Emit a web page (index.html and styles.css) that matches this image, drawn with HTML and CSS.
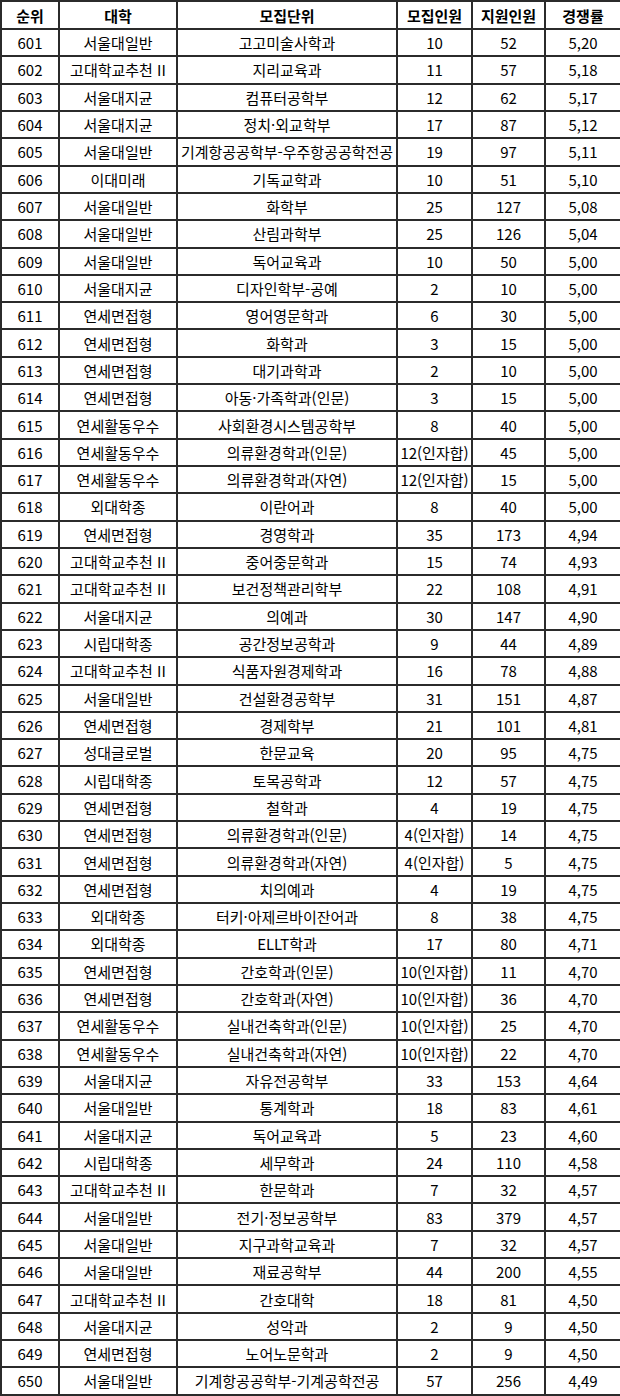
FILE: index.html
```html
<!DOCTYPE html>
<html lang="ko">
<head>
<meta charset="utf-8">
<title>경쟁률 601-650</title>
<link rel="stylesheet" href="styles.css">
</head>
<body>
<table class="rank-table">
<colgroup>
<col class="c-rank"><col class="c-univ"><col class="c-unit"><col class="c-quota"><col class="c-apply"><col class="c-ratio">
</colgroup>
<thead>
<tr class="head-row"><th>순위</th><th>대학</th><th>모집단위</th><th>모집인원</th><th>지원인원</th><th>경쟁률</th></tr>
</thead>
<tbody>
<tr><td>601</td><td>서울대일반</td><td>고고미술사학과</td><td>10</td><td>52</td><td>5,20</td></tr>
<tr><td>602</td><td>고대학교추천 II</td><td>지리교육과</td><td>11</td><td>57</td><td>5,18</td></tr>
<tr><td>603</td><td>서울대지균</td><td>컴퓨터공학부</td><td>12</td><td>62</td><td>5,17</td></tr>
<tr><td>604</td><td>서울대지균</td><td>정치·외교학부</td><td>17</td><td>87</td><td>5,12</td></tr>
<tr><td>605</td><td>서울대일반</td><td>기계항공공학부-우주항공공학전공</td><td>19</td><td>97</td><td>5,11</td></tr>
<tr><td>606</td><td>이대미래</td><td>기독교학과</td><td>10</td><td>51</td><td>5,10</td></tr>
<tr><td>607</td><td>서울대일반</td><td>화학부</td><td>25</td><td>127</td><td>5,08</td></tr>
<tr><td>608</td><td>서울대일반</td><td>산림과학부</td><td>25</td><td>126</td><td>5,04</td></tr>
<tr><td>609</td><td>서울대일반</td><td>독어교육과</td><td>10</td><td>50</td><td>5,00</td></tr>
<tr><td>610</td><td>서울대지균</td><td>디자인학부-공예</td><td>2</td><td>10</td><td>5,00</td></tr>
<tr><td>611</td><td>연세면접형</td><td>영어영문학과</td><td>6</td><td>30</td><td>5,00</td></tr>
<tr><td>612</td><td>연세면접형</td><td>화학과</td><td>3</td><td>15</td><td>5,00</td></tr>
<tr><td>613</td><td>연세면접형</td><td>대기과학과</td><td>2</td><td>10</td><td>5,00</td></tr>
<tr><td>614</td><td>연세면접형</td><td>아동·가족학과(인문)</td><td>3</td><td>15</td><td>5,00</td></tr>
<tr><td>615</td><td>연세활동우수</td><td>사회환경시스템공학부</td><td>8</td><td>40</td><td>5,00</td></tr>
<tr><td>616</td><td>연세활동우수</td><td>의류환경학과(인문)</td><td>12(인자합)</td><td>45</td><td>5,00</td></tr>
<tr><td>617</td><td>연세활동우수</td><td>의류환경학과(자연)</td><td>12(인자합)</td><td>15</td><td>5,00</td></tr>
<tr><td>618</td><td>외대학종</td><td>이란어과</td><td>8</td><td>40</td><td>5,00</td></tr>
<tr><td>619</td><td>연세면접형</td><td>경영학과</td><td>35</td><td>173</td><td>4,94</td></tr>
<tr><td>620</td><td>고대학교추천 II</td><td>중어중문학과</td><td>15</td><td>74</td><td>4,93</td></tr>
<tr><td>621</td><td>고대학교추천 II</td><td>보건정책관리학부</td><td>22</td><td>108</td><td>4,91</td></tr>
<tr><td>622</td><td>서울대지균</td><td>의예과</td><td>30</td><td>147</td><td>4,90</td></tr>
<tr><td>623</td><td>시립대학종</td><td>공간정보공학과</td><td>9</td><td>44</td><td>4,89</td></tr>
<tr><td>624</td><td>고대학교추천 II</td><td>식품자원경제학과</td><td>16</td><td>78</td><td>4,88</td></tr>
<tr><td>625</td><td>서울대일반</td><td>건설환경공학부</td><td>31</td><td>151</td><td>4,87</td></tr>
<tr><td>626</td><td>연세면접형</td><td>경제학부</td><td>21</td><td>101</td><td>4,81</td></tr>
<tr><td>627</td><td>성대글로벌</td><td>한문교육</td><td>20</td><td>95</td><td>4,75</td></tr>
<tr><td>628</td><td>시립대학종</td><td>토목공학과</td><td>12</td><td>57</td><td>4,75</td></tr>
<tr><td>629</td><td>연세면접형</td><td>철학과</td><td>4</td><td>19</td><td>4,75</td></tr>
<tr><td>630</td><td>연세면접형</td><td>의류환경학과(인문)</td><td>4(인자합)</td><td>14</td><td>4,75</td></tr>
<tr><td>631</td><td>연세면접형</td><td>의류환경학과(자연)</td><td>4(인자합)</td><td>5</td><td>4,75</td></tr>
<tr><td>632</td><td>연세면접형</td><td>치의예과</td><td>4</td><td>19</td><td>4,75</td></tr>
<tr><td>633</td><td>외대학종</td><td>터키·아제르바이잔어과</td><td>8</td><td>38</td><td>4,75</td></tr>
<tr><td>634</td><td>외대학종</td><td>ELLT학과</td><td>17</td><td>80</td><td>4,71</td></tr>
<tr><td>635</td><td>연세면접형</td><td>간호학과(인문)</td><td>10(인자합)</td><td>11</td><td>4,70</td></tr>
<tr><td>636</td><td>연세면접형</td><td>간호학과(자연)</td><td>10(인자합)</td><td>36</td><td>4,70</td></tr>
<tr><td>637</td><td>연세활동우수</td><td>실내건축학과(인문)</td><td>10(인자합)</td><td>25</td><td>4,70</td></tr>
<tr><td>638</td><td>연세활동우수</td><td>실내건축학과(자연)</td><td>10(인자합)</td><td>22</td><td>4,70</td></tr>
<tr><td>639</td><td>서울대지균</td><td>자유전공학부</td><td>33</td><td>153</td><td>4,64</td></tr>
<tr><td>640</td><td>서울대일반</td><td>통계학과</td><td>18</td><td>83</td><td>4,61</td></tr>
<tr><td>641</td><td>서울대지균</td><td>독어교육과</td><td>5</td><td>23</td><td>4,60</td></tr>
<tr><td>642</td><td>시립대학종</td><td>세무학과</td><td>24</td><td>110</td><td>4,58</td></tr>
<tr><td>643</td><td>고대학교추천 II</td><td>한문학과</td><td>7</td><td>32</td><td>4,57</td></tr>
<tr><td>644</td><td>서울대일반</td><td>전기·정보공학부</td><td>83</td><td>379</td><td>4,57</td></tr>
<tr><td>645</td><td>서울대일반</td><td>지구과학교육과</td><td>7</td><td>32</td><td>4,57</td></tr>
<tr><td>646</td><td>서울대일반</td><td>재료공학부</td><td>44</td><td>200</td><td>4,55</td></tr>
<tr><td>647</td><td>고대학교추천 II</td><td>간호대학</td><td>18</td><td>81</td><td>4,50</td></tr>
<tr><td>648</td><td>서울대지균</td><td>성악과</td><td>2</td><td>9</td><td>4,50</td></tr>
<tr><td>649</td><td>연세면접형</td><td>노어노문학과</td><td>2</td><td>9</td><td>4,50</td></tr>
<tr><td>650</td><td>서울대일반</td><td>기계항공공학부-기계공학전공</td><td>57</td><td>256</td><td>4,49</td></tr>
</tbody>
</table>
</body>
</html>
```

FILE: styles.css
```css
html, body {
  margin: 0;
  padding: 0;
  background: #ffffff;
}

.rank-table {
  width: 620px;
  border-collapse: collapse;
  table-layout: fixed;
  font-family: "Noto Sans CJK KR", "Noto Sans", sans-serif;
  font-size: 15px;
  line-height: 1;
  color: #000000;
}

.c-rank { width: 58px; }
.c-univ { width: 118px; }
.c-unit { width: 220px; }
.c-quota { width: 75px; }
.c-apply { width: 73px; }
.c-ratio { width: 76px; }

.rank-table th,
.rank-table td {
  border: 2px solid #2b2b2b;
  padding: 0;
  text-align: center;
  vertical-align: middle;
  white-space: nowrap;
  overflow: visible;
}

.rank-table th {
  font-weight: 700;
}

.rank-table .head-row {
  height: 28px;
}

.rank-table tbody tr {
  height: 27.32px;
}
```
